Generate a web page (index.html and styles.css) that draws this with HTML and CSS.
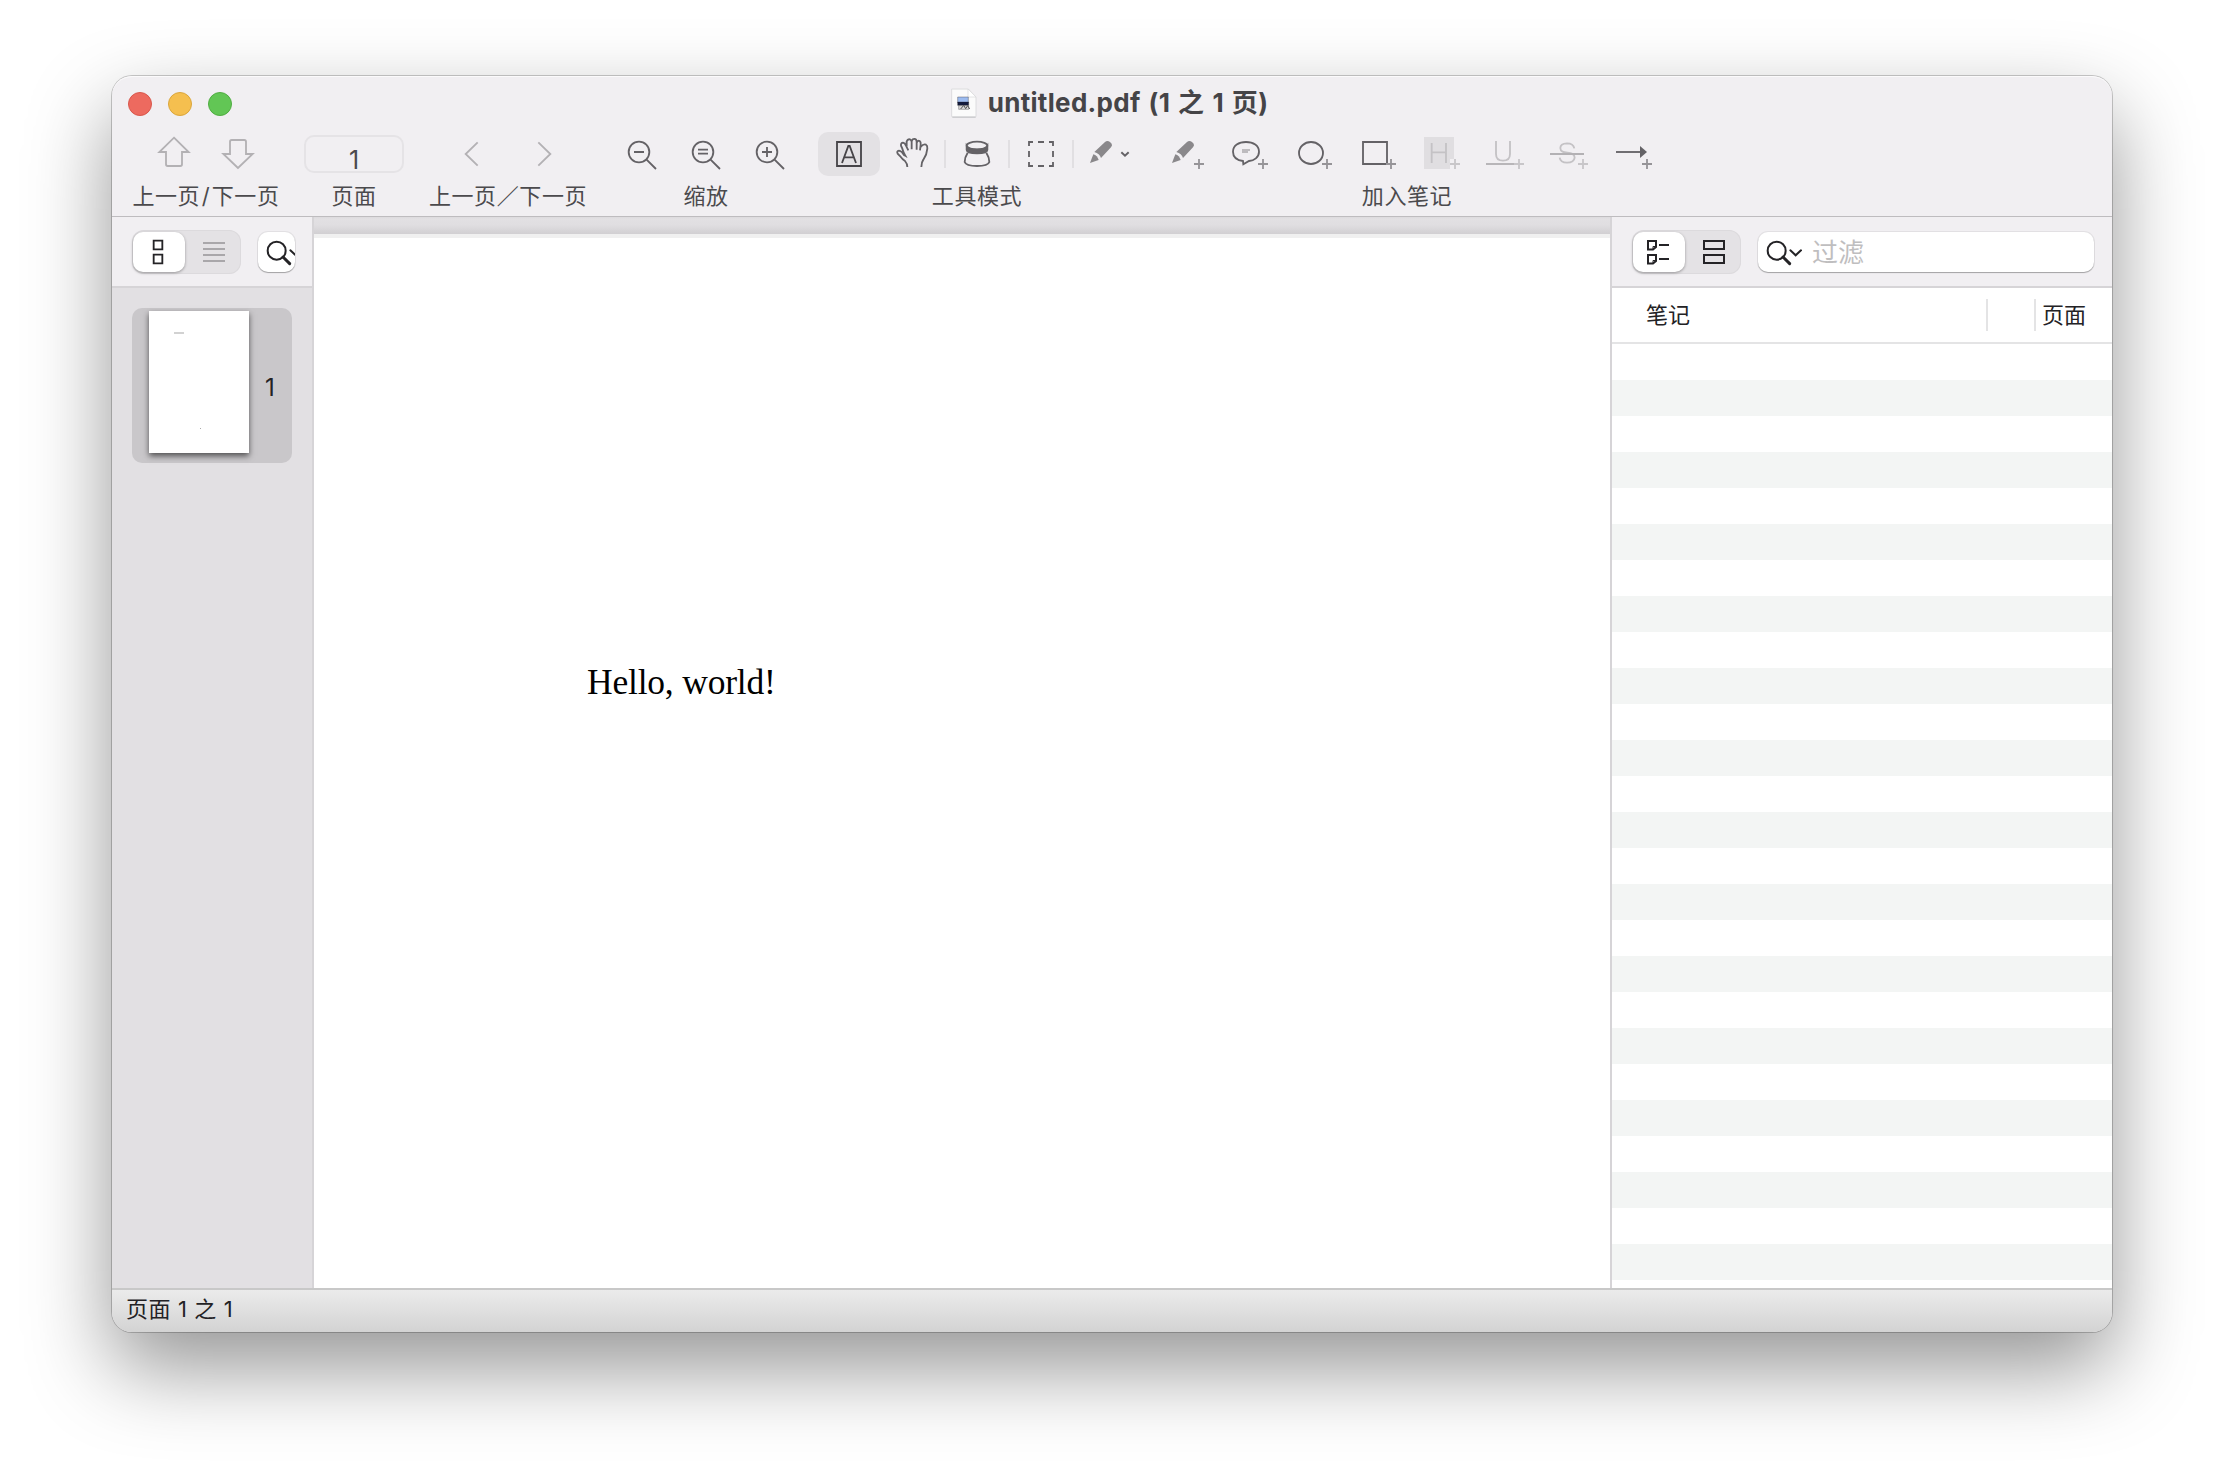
FILE: index.html
```html
<!DOCTYPE html>
<html lang="zh-CN">
<head>
<meta charset="utf-8">
<title>untitled.pdf</title>
<link rel="stylesheet" href="styles.css">
</head>
<body>
<div class="window">
  <header class="toolbar">
    <div class="titlebar">
      <div class="lights"><span class="light close"></span><span class="light minimize"></span><span class="light zoom"></span></div>
      <div class="title">
        <svg class="doc-icon" width="28" height="32" viewBox="60 50 84 96">
          <path d="M65 56H115L138 80V139H65Z" fill="#fbfbfb" stroke="#dcdcde" stroke-width="3"/>
          <path d="M67 141H137" stroke="#c8c8ca" stroke-width="3"/>
          <path d="M114 56V80H138Z" fill="#fff" stroke="#d8d8da" stroke-width="2"/>
          <path d="M83 80H115V97H83Z" fill="#9dbcf0"/><path d="M83 95H116V105H83Z" fill="#111a3c"/>
          <path d="M86 106H116V117H86Z" fill="#dcdcdc"/><path d="M92 116L101 105 107 115 113 106 119 116" fill="none" stroke="#555" stroke-width="3"/>
        </svg>
        <h1>untitled.pdf (1 之 1 页)</h1>
      </div>
    </div>
    <div class="tools">
      <div class="group g-page">
        <div class="items">
          <svg class="item dim" viewBox="126 216 192 132"><path d="M222 233L266 276H246V313Q246 318 241 318H203Q198 318 198 313V276H178Z"/></svg>
          <svg class="item dim" viewBox="318 216 192 132"><path d="M414 324L370 282H390V245Q390 240 395 240H433Q438 240 438 245V282H458Z"/></svg>
        </div>
        <span class="label">上一页<span class="slash">/</span>下一页</span>
      </div>
      <div class="group g-field">
        <div class="items"><div class="page-field">1</div></div>
        <span class="label">页面</span>
      </div>
      <div class="group g-history">
        <div class="items">
          <svg class="item wide dim" viewBox="78 66 216 132"><path d="M203 97L167 132 203 167"/></svg>
          <svg class="item wide dim" viewBox="294 66 216 132"><path d="M385 97L421 132 385 167"/></svg>
        </div>
        <span class="label">上一页／下一页</span>
      </div>
      <div class="group g-zoom">
        <div class="items">
          <svg class="item" viewBox="600 66 192 132"><circle cx="687" cy="126" r="31"/><path d="M709 148L738 177M672 126H702"/></svg>
          <svg class="item" viewBox="792 66 192 132"><circle cx="879" cy="126" r="31"/><path d="M901 148L930 177M864 119H894M864 131H894"/></svg>
          <svg class="item" viewBox="984 66 192 132"><circle cx="1071" cy="126" r="31"/><path d="M1093 148L1122 177M1056 126H1086M1071 111V141"/></svg>
        </div>
        <span class="label">缩放</span>
      </div>
      <div class="group g-mode">
        <div class="items">
          <svg class="item selected" viewBox="54 66 186 132"><path d="M111 96H183V168H111Z"/><path d="M126 159L145 108H149L168 159M133 142H161"/></svg>
          <svg class="item" viewBox="240 66 192 132"><path d="M322 171Q322 161 315 153Q308 149 300 138L293 131Q289 123 297 122Q305 123 312 135L316 137Q310 127 307 116L303 107Q302 98 309 98Q315 99 318 107L325 121M320 109V94Q323 86 330 88Q335 90 335 97V118M335 95Q337 85 345 87Q350 88 350 96V119M350 99Q353 90 359 93Q363 96 362 104L360 121M362 111Q370 101 378 104Q383 107 382 116Q381 133 370 149Q364 157 364 171"/></svg>
          <svg class="item divided" viewBox="432 66 192 132"><path d="M500 108V120Q500 130 531 130Q562 130 562 120V108Q556 118 531 118Q506 118 500 108Z" fill="currentColor"/><ellipse cx="531" cy="107" rx="31" ry="12"/><path d="M503 128Q494 142 494 156Q498 168 531 168Q564 168 568 156Q568 142 559 128"/></svg>
          <svg class="item divided" viewBox="624 66 192 132"><path d="M687 108V96H699M714 96H732M747 96H759V108M759 123V141M759 156V168H747M732 168H714M699 168H687V156M687 141V123"/></svg>
          <svg class="item divided" viewBox="816 66 192 132"><g class="solid"><path d="M883 126L915 96Q922 90 930 96L935 101Q938 106 933 112L903 144Q899 131 883 126Z"/><path d="M880 133Q892 137 896 150L870 159Z"/></g><path d="M964 127L975 137 986 127" stroke-width="6"/></svg>
        </div>
        <span class="label">工具模式</span>
      </div>
      <div class="group g-notes">
        <div class="items">
          <svg class="item" viewBox="3 66 192 132"><g class="solid"><path d="M79 126L111 96Q118 90 126 96L131 101Q134 106 129 112L99 144Q95 131 79 126Z"/><path d="M76 133Q88 137 92 150L66 159Z"/></g><path class="plus" d="M132 162H162M147 147V177"/></svg>
          <svg class="item" viewBox="195 66 192 132"><path d="M279 153C258 150 249 138 249 125C249 107 266 96 288 96C310 96 327 107 327 125C327 142 312 152 297 153L280 163Z"/><path d="M276 120H300M276 126H294" stroke="#bdbbbe"/><path class="plus" d="M324 162H354M339 147V177"/></svg>
          <svg class="item" viewBox="387 66 192 132"><ellipse cx="483" cy="129" rx="36" ry="33"/><path class="plus" d="M516 162H546M531 147V177"/></svg>
          <svg class="item" viewBox="579 66 192 132"><path d="M639 96H711V162H639Z"/><path class="plus" d="M708 162H738M723 147V177"/></svg>
          <svg class="item off" viewBox="21 66 192 132"><path d="M72 81H162V147H150V177H72Z" fill="#e0dee1" stroke="none"/><path d="M95 99V159M138 99V159M95 127H138"/><path class="plus" d="M150 162H180M165 147V177"/></svg>
          <svg class="item off" viewBox="213 66 192 132"><path d="M288 93V132Q288 152 309 152Q330 152 330 132V93"/><path d="M258 162H342" stroke="#b3b1b4"/><path class="plus" d="M342 162H372M357 147V177"/></svg>
          <svg class="item off" viewBox="405 66 192 132"><path d="M523 115Q520 100 501 100Q481 101 481 114C481 137 524 119 524 143Q522 158 501 158Q481 158 479 143"/><path d="M450 132H552" stroke="#b3b1b4"/><path class="plus" d="M534 162H564M549 147V177"/></svg>
          <svg class="item" viewBox="597 66 192 132"><path d="M648 126H724"/><path d="M720 108L741 126 720 144Z" fill="currentColor" stroke="none"/><path class="plus" d="M726 162H756M741 147V177"/></svg>
        </div>
        <span class="label">加入笔记</span>
      </div>
    </div>
  </header>
  <main class="content">
    <aside class="sidebar left">
      <div class="side-head">
        <div class="segmented">
          <svg class="seg on" viewBox="99 516 156 120"><path d="M161 542H187V568H161ZM161 584H187V610H161Z"/></svg>
          <svg class="seg" viewBox="261 516 156 120"><path d="M309 549H375M309 567H375M309 585H375M309 603H375" stroke="#a9a7aa"/></svg>
        </div>
        <div class="search">
          <svg class="search-icon" viewBox="474 516 132 120"><circle cx="530" cy="572" r="27"/><path d="M549 591L569 611" stroke-width="9" stroke-linecap="round"/><path d="M571 571L587 586 603 571" stroke-width="6" stroke-linecap="round"/></svg>
        </div>
      </div>
      <div class="thumbs">
        <div class="thumb">
          <div class="sheet"><span class="line"></span><span class="folio"></span></div>
          <span class="number">1</span>
        </div>
      </div>
    </aside>
    <section class="viewer">
      <div class="page"><p>Hello, world!</p></div>
    </section>
    <aside class="sidebar right">
      <div class="side-head">
        <div class="segmented">
          <svg class="seg on" viewBox="0 0 52 40"><path d="M15 9h8v6l-3 2.600h-5zM15 23h8v6l-3 2.600h-5zM26 13h10M26 27h10"/><path d="M20 17.500v-3h3M20 31.500v-3h3" stroke-width="1"/></svg>
          <svg class="seg" viewBox="0 0 52 40"><path d="M17 9h20v8h-20zM17 23h20v8h-20z"/></svg>
        </div>
        <div class="search">
          <svg class="search-icon" viewBox="474 516 132 120"><circle cx="530" cy="572" r="27"/><path d="M549 591L569 611" stroke-width="9" stroke-linecap="round"/><path d="M571 571L587 586 603 571" stroke-width="6" stroke-linecap="round"/></svg>
          <span class="placeholder">过滤</span>
        </div>
      </div>
      <div class="table-head"><span class="col note">笔记</span><span class="col kind"></span><span class="col pg">页面</span></div>
      <div class="rows"></div>
    </aside>
  </main>
  <footer class="status">页面 1 之 1</footer>
</div>
</body>
</html>
```
FILE: styles.css
```css
* { box-sizing: border-box; }
body {
  margin: 0;
  padding: 76px 112px 148px;
  height: 1480px;
  background: #fff;
  overflow: hidden;
  font-family: Inter, "Noto Sans CJK SC", sans-serif;
  font-size: 22px;
  color: #232225;
}
.window {
  display: flex;
  flex-direction: column;
  width: 2000px;
  height: 1256px;
  border-radius: 20px;
  background: #f1eff2;
  box-shadow: 0 0 0 1px rgba(0,0,0,.2), 0 36px 84px rgba(0,0,0,.42);
}
.toolbar {
  height: 141px;
  flex: none;
  border-bottom: 1px solid #bebcbf;
  border-radius: 20px 20px 0 0;
  box-shadow: inset 0 1px #fbfafb;
}
.titlebar { display: grid; grid-template-columns: 120px 1fr 126px; height: 56px; align-items: center; }
.lights { display: flex; gap: 16px; padding-left: 16px; }
.light { width: 24px; height: 24px; flex: none; border-radius: 50%; border: 1px solid; }
.close { background: #ed6a5f; border-color: #d9574c; }
.minimize { background: #f5bf4f; border-color: #dba63c; }
.zoom { background: #62c655; border-color: #50ad42; }
.title { display: flex; align-items: center; justify-content: center; gap: 10px; padding-bottom: 2px; }
.title h1 { margin: 0; font-size: 26px; line-height: 36px; font-weight: 700; color: #454447; letter-spacing: .3px; word-spacing: 1.500px; white-space: nowrap; }
.tools { display: flex; padding-left: 30px; }
.group { display: flex; flex-direction: column; align-items: center; flex: none; }
.g-page { width: 128px; }
.g-field { width: 100px; margin-left: 34px; }
.g-history { width: 144px; margin-left: 32px; }
.g-zoom { width: 192px; margin-left: 30px; }
.g-mode { width: 318px; margin-left: 16px; }
.g-notes { width: 512px; margin-left: 15px; }
.items { display: flex; height: 44px; }
.item { width: 64px; height: 44px; flex: none; color: #646266; }
.item.wide { width: 72px; }
svg { fill: none; stroke: currentColor; }
.item { stroke-width: 5.500px; }
.dim { color: #b3b1b4; }
.off { color: #c4c2c5; }
.plus { stroke: #969498; }
.off .plus { stroke: #c8c6c9; }
.solid { fill: #8a888b; stroke: none; }
.selected { width: 62px; background: #e3e1e4; border-radius: 10px; color: #464448; }
.divided { background: linear-gradient(#e1dfe2, #e1dfe2) 0 8px / 2px 28px no-repeat; }
.label { margin-top: 4px; line-height: 32px; letter-spacing: .6px; white-space: nowrap; color: #4b4a4d; }
.slash { padding: 0 1.500px; }
.page-field {
  width: 100px;
  height: 38px;
  margin-top: 3px;
  padding-top: 7px;
  border: 2px solid #e5e3e6;
  border-radius: 10px;
  text-align: center;
  font-size: 25px;
  line-height: 32px;
  color: #4b4a4d;
}
.content { display: flex; flex: 1; min-height: 0; }
.sidebar { display: flex; flex-direction: column; flex: none; }
.left { width: 202px; background: #e2e0e3; border-right: 2px solid #d6d4d7; }
.right { width: 502px; background: #fff; border-left: 2px solid #d6d4d7; }
.side-head { display: flex; height: 71px; flex: none; padding: 13px 18px 0 20px; gap: 17px; background: #f1eff2; border-bottom: 2px solid #d6d4d7; }
.segmented { display: flex; gap: 2px; width: 109px; height: 44px; flex: none; padding: 2px 1px; border-radius: 12px; background: #e4e2e5; box-shadow: inset 0 0 0 1px #dcdadd; }
.seg { width: 52px; height: 40px; stroke: #242326; stroke-width: 2px; }
.left .seg { stroke-width: 5.500px; }
.seg.on { background: #fff; border-radius: 10px; box-shadow: 0 1px 3px rgba(0,0,0,.35); }
.search { display: flex; align-items: center; flex: 1; min-width: 0; height: 40px; margin-top: 2px; border-radius: 10px; background: #fff; box-shadow: 0 0 0 1px rgba(0,0,0,.06), 0 1px 1px rgba(0,0,0,.28); }
.left .search { flex: none; width: 37px; overflow: hidden; }
.search-icon { width: 44px; height: 40px; flex: none; stroke: #242326; stroke-width: 6px; }
.placeholder { margin: 2px 0 0 10px; font-size: 26px; line-height: 38px; color: #bfbebf; }
.thumbs { padding: 20px; }
.thumb { display: flex; align-items: center; height: 155px; padding-left: 17px; border-radius: 10px; background: #c9c7ca; }
.sheet { display: flex; flex-direction: column; width: 100px; height: 142px; margin-top: -7px; padding: 21px 25px; background: #fff; box-shadow: 0 3px 6px rgba(0,0,0,.6); }
.line { width: 10px; height: 2px; background: #d2d2d2; }
.folio { width: 1px; height: 1px; margin: 94px 0 0 26px; background: #aaa; }
.number { margin: 3px 0 0 16px; font-size: 24px; }
.viewer { flex: 1; padding-top: 17px; background: linear-gradient(#dddbde, #e2e0e3 2px, #e0dee1 8px, #d1cfd2 17px); background-size: 100% 17px; background-repeat: no-repeat; }
.page { height: 100%; border-top: 4px solid #f0f0f0; background: #fff; padding: 424px 273px 0; }
.page p { margin: 0; font-family: "Liberation Serif", serif; font-size: 35.500px; line-height: 40px; letter-spacing: -.2px; color: #000; white-space: nowrap; }
.table-head { display: flex; align-items: center; height: 56px; flex: none; border-bottom: 2px solid #e4e4e5; }
.col { height: 32px; line-height: 32px; }
.note { width: 374px; padding-left: 34px; }
.kind { width: 48px; border-left: 2px solid #e4e4e5; }
.pg { flex: 1; padding-left: 6px; border-left: 2px solid #e4e4e5; }
.rows { flex: 1; background: repeating-linear-gradient(#fff 0 36px, #f3f5f4 36px 72px); }
.status {
  height: 44px;
  flex: none;
  padding-left: 14px;
  border-top: 2px solid #c8c8c8;
  border-radius: 0 0 20px 20px;
  background: linear-gradient(#ebebeb, #d3d3d3);
  line-height: 39px;
  letter-spacing: .4px;
  word-spacing: .5px;
}
```
